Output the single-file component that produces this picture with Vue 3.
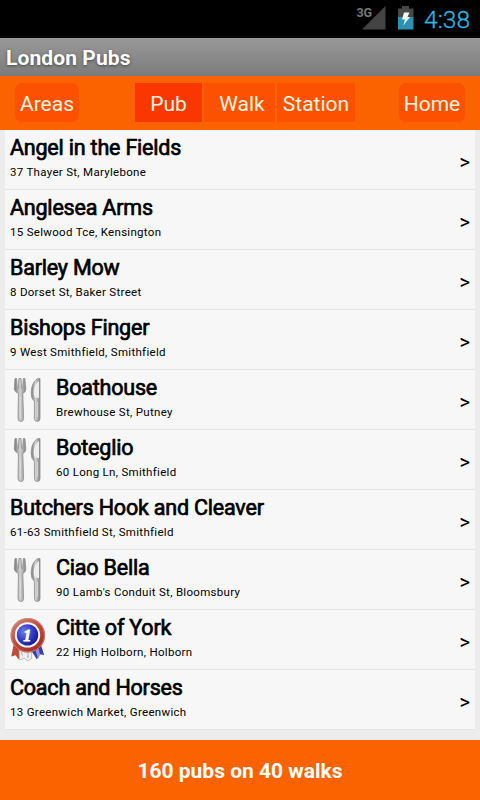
<script setup>
const pubs = [
  { name: 'Angel in the Fields', address: '37 Thayer St, Marylebone' },
  { name: 'Anglesea Arms', address: '15 Selwood Tce, Kensington' },
  { name: 'Barley Mow', address: '8 Dorset St, Baker Street' },
  { name: 'Bishops Finger', address: '9 West Smithfield, Smithfield' },
  { name: 'Boathouse', address: 'Brewhouse St, Putney', icon: 'food' },
  { name: 'Boteglio', address: '60 Long Ln, Smithfield', icon: 'food' },
  { name: 'Butchers Hook and Cleaver', address: '61-63 Smithfield St, Smithfield' },
  { name: 'Ciao Bella', address: "90 Lamb's Conduit St, Bloomsbury", icon: 'food' },
  { name: 'Citte of York', address: '22 High Holborn, Holborn', icon: 'award' },
  { name: 'Coach and Horses', address: '13 Greenwich Market, Greenwich' },
]
</script>

<template>
  <div class="screen">
    <div class="status">
      <span class="net">3G</span>
      <svg class="signal" width="24" height="24" viewBox="0 0 24 24"><path d="M0 23.5 23.5 0v23.5z" fill="#444" /></svg>
      <svg class="battery" width="16" height="24" viewBox="0 0 16 24">
        <path d="M0 2.500h4V0h7v2.500h4.500V11H0z" fill="#484848" />
        <path d="M0 11h15.500v12.500H0z" fill="#2c91b5" />
        <path d="M6 6.500h5.500L9.500 11H12L5.300 19.500 7 13.500H4z" fill="#f4f7f8" />
      </svg>
      <span class="clock">4:38</span>
    </div>
    <div class="titlebar">London Pubs</div>
    <nav class="toolbar">
      <button class="btn areas">Areas</button>
      <div class="tabs">
        <button class="tab pub active">Pub</button>
        <button class="tab walk">Walk</button>
        <button class="tab station">Station</button>
      </div>
      <button class="btn home">Home</button>
    </nav>
    <main class="content">
      <ul class="list">
        <li v-for="pub in pubs" :key="pub.name" class="row">
          <svg v-if="pub.icon === 'food'" class="icon" width="46" height="59" viewBox="0 0 46 59">
            <defs>
              <linearGradient id="steel">
                <stop offset="0" stop-color="#777" />
                <stop offset=".5" stop-color="#d2d2d2" />
                <stop offset="1" stop-color="#858585" />
              </linearGradient>
            </defs>
            <g fill="url(#steel)" stroke="#8f8f8f" stroke-width=".8" stroke-linejoin="round">
              <path d="M5 8.500h1.600l.8 10h.9l.6-10h2.100l.6 10h.9l.8-10h1.600l.9 10.500q.1 3.200-3 4.400l.8 25q0 3.100-2.800 3.100t-2.800-3.100l.4-25q-3.700-1.400-4.100-4.400z" />
              <path d="M30 8.500V48.500q0 3-2.800 3t-2.800-3V31.500q-3.200-2.500-3.200-8.500 0-9.500 5.600-13.900 1.300-.9 3.200-.6z" />
            </g>
            <path d="M29 11V28l-4-.5q-2-3.500-1-8.500.8-5 5-8z" fill="#eee" />
            <path d="M10.200 27v20M27.300 32v15" stroke="#ddd" stroke-width="1" fill="none" />
          </svg>
          <svg v-else-if="pub.icon === 'award'" class="icon" width="46" height="59" viewBox="0 0 46 59">
            <defs>
              <linearGradient id="ring" x1="0" y1="0" x2=".7" y2="1">
                <stop offset="0" stop-color="#d58a7c" />
                <stop offset=".55" stop-color="#bd4a3c" />
                <stop offset="1" stop-color="#9f3029" />
              </linearGradient>
              <radialGradient id="disc" cx=".35" cy=".35" r=".75">
                <stop offset="0" stop-color="#6c82ed" />
                <stop offset=".5" stop-color="#3442c9" />
                <stop offset="1" stop-color="#101291" />
              </radialGradient>
            </defs>
            <path d="M4 33 1.200 46.500l4.500-1.300 2.800 4 5-11z" fill="#bb4c38" />
            <path d="m30 32 4.200 13-4.800-.8-2.500 5.300-7-11z" fill="#383fa9" />
            <path d="m25 38 3 11 2-4-2-10z" fill="#8f95d8" />
            <path d="M9 39 9.500 50l4.500-1.700 4 2.700 3.700-2.500-.3-9.500z" fill="#eee" stroke="#aaa" stroke-width=".7" />
            <path d="m11 42 1.500 3.500M18 43v5" stroke="#999" stroke-width=".8" />
            <circle cx="17.800" cy="25.200" r="17.300" fill="url(#ring)" />
            <circle cx="17.800" cy="25.200" r="16.700" fill="none" stroke="#dc9a8c" stroke-width=".7" />
            <circle cx="17.500" cy="24.900" r="12.700" fill="#f7f4f5" />
            <circle cx="17.500" cy="24.900" r="10.700" fill="url(#disc)" />
            <text x="13.300" y="30.900" class="rank">1</text>
          </svg>
          <div class="info">
            <div class="name">{{ pub.name }}</div>
            <div class="address">{{ pub.address }}</div>
          </div>
          <span class="chevron">&gt;</span>
        </li>
      </ul>
    </main>
    <footer class="footer">160 pubs on 40 walks</footer>
  </div>
</template>

<style>
body {
  background: #000;
}
</style>

<style scoped>
.screen {
  width: 480px;
  height: 800px;
  overflow: hidden;
  display: flex;
  flex-direction: column;
  font-family: Roboto, sans-serif;
  color: #000;
}
.status {
  height: 38px;
  flex: none;
  box-sizing: border-box;
  background: #000;
  display: flex;
  justify-content: flex-end;
  padding: 6px 10px 0 0;
}
.net {
  font-size: 12.5px;
  line-height: 14px;
  font-weight: 700;
  color: #777;
  margin-right: -10px;
}
.battery {
  margin: 0 10px 0 12px;
}
.clock {
  font-size: 24.5px;
  line-height: 28px;
  font-weight: 300;
  color: #33b5e5;
  -webkit-text-stroke: .3px #33b5e5;
}
.titlebar {
  height: 38px;
  flex: none;
  box-sizing: border-box;
  padding-left: 6px;
  background: linear-gradient(#999, #7b7b7b);
  color: #fff;
  font-size: 21px;
  letter-spacing: .1px;
  font-weight: 700;
  line-height: 40px;
  text-shadow: 0 1px 3px #444;
}
.toolbar {
  height: 54px;
  flex: none;
  box-sizing: border-box;
  padding: 7px 15px;
  background: #fb6200;
  display: flex;
  justify-content: space-between;
}
.toolbar button {
  height: 39px;
  border: 0;
  padding: 2px 0 0;
  background: #fc5200;
  color: #fff3df;
  font: 21px Roboto, sans-serif;
}
.toolbar .btn {
  border-radius: 7px;
}
.areas {
  width: 64px;
}
.home {
  width: 66px;
}
.tabs {
  display: flex;
  gap: 2px;
  margin-right: -12px;
}
.toolbar .active {
  background: #fb3700;
}
.pub {
  width: 67px;
}
.toolbar .walk {
  width: 71px;
  padding-left: 5px;
}
.station {
  width: 78px;
}
.content {
  height: 610px;
  flex: none;
  box-sizing: border-box;
  padding: 0 5px;
  background: #ececec;
}
.list {
  list-style: none;
  margin: 0;
  padding: 0;
}
.row {
  height: 60px;
  box-sizing: border-box;
  padding: 0 5px;
  border-bottom: 1px solid #e4e4e4;
  background: #f7f7f7;
  display: flex;
}
.icon {
  flex: none;
}
.info {
  flex: 1;
  padding-top: 5px;
}
.name {
  font-size: 21.5px;
  line-height: 26px;
  letter-spacing: -.2px;
  -webkit-text-stroke: .7px #000;
}
.address {
  font-size: 11.5px;
  line-height: 16px;
  letter-spacing: .3px;
  margin-top: 3px;
}
.chevron {
  font-size: 20px;
  line-height: 22px;
  padding-top: 21px;
  -webkit-text-stroke: .1px #000;
}
.rank {
  font: italic 700 16px "Liberation Serif", serif;
  fill: #fff;
  stroke: #fff;
  stroke-width: .8px;
}
.footer {
  height: 60px;
  flex: none;
  background: #fb6200;
  color: #fff;
  font-size: 21px;
  font-weight: 700;
  line-height: 62px;
  text-align: center;
}
</style>
